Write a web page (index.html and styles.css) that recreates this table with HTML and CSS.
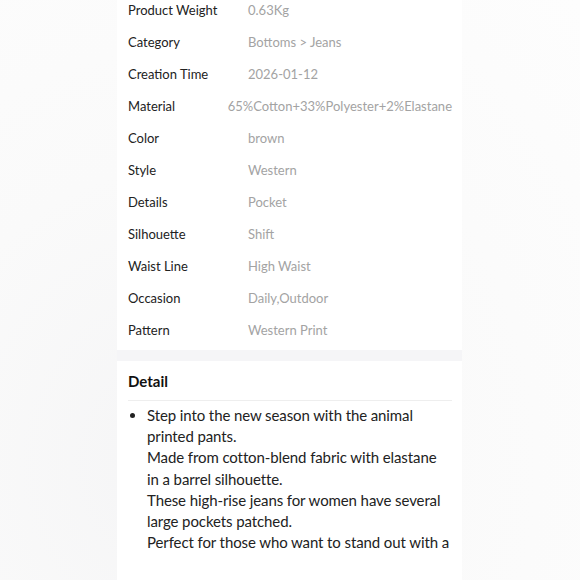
FILE: index.html
```html
<!DOCTYPE html>
<html lang="en">
<head>
<meta charset="utf-8">
<title>Product details</title>
<link rel="stylesheet" href="styles.css">
</head>
<body>
<main class="page">
  <section class="card specs">
    <div class="row"><span class="label">Product Weight</span><span class="value">0.63Kg</span></div>
    <div class="row"><span class="label">Category</span><span class="value">Bottoms &gt; Jeans</span></div>
    <div class="row"><span class="label">Creation Time</span><span class="value">2026-01-12</span></div>
    <div class="row"><span class="label">Material</span><span class="value value-wide">65%Cotton+33%Polyester+2%Elastane</span></div>
    <div class="row"><span class="label">Color</span><span class="value">brown</span></div>
    <div class="row"><span class="label">Style</span><span class="value">Western</span></div>
    <div class="row"><span class="label">Details</span><span class="value">Pocket</span></div>
    <div class="row"><span class="label">Silhouette</span><span class="value">Shift</span></div>
    <div class="row"><span class="label">Waist Line</span><span class="value">High Waist</span></div>
    <div class="row"><span class="label">Occasion</span><span class="value">Daily,Outdoor</span></div>
    <div class="row"><span class="label">Pattern</span><span class="value">Western Print</span></div>
  </section>
  <div class="gap"></div>
  <section class="card detail">
    <h2 class="detail-title">Detail</h2>
    <ul class="detail-list">
      <li>Step into the new season with the animal printed pants.<br>Made from cotton-blend fabric with elastane in a barrel silhouette.<br>These high-rise jeans for women have several large pockets patched.<br>Perfect for those who want to stand out with a</li>
    </ul>
  </section>
</main>
</body>
</html>
```

FILE: styles.css
```css
html, body {
  margin: 0;
  padding: 0;
}
body {
  width: 580px;
  height: 580px;
  overflow: hidden;
  background: radial-gradient(ellipse at 30% 80%, #f5f5f6 0%, #fafafa 45%, #fdfdfd 100%);
  font-family: Lato, "Noto Sans", sans-serif;
}
.page {
  width: 345px;
  margin: -6px 0 0 117px;
  display: flex;
  flex-direction: column;
}
.card {
  background: #fff;
}
.specs {
  padding: 0 10px 4px 11px;
}
.row {
  height: 32px;
  display: flex;
  align-items: center;
  font-size: 13px;
}
.label {
  width: 120px;
  flex: none;
  color: #222;
}
.value {
  width: 204px;
  flex: none;
  display: flex;
  color: #a3a3a3;
  white-space: nowrap;
}
.value-wide {
  justify-content: flex-end;
}
.gap {
  height: 11px;
  background: #f5f5f7;
}
.detail {
  padding: 10px 11.5px 40px 11px;
  height: 260px;
}
.detail-title {
  margin: 0 -1.5px 0 0;
  font-size: 15px;
  font-weight: 700;
  color: #111;
  line-height: 20px;
  padding-bottom: 9px;
  border-bottom: 1px solid #eeeeee;
}
.detail-list {
  margin: 4px 0 0;
  padding: 0 0 0 19px;
  font-size: 15px;
  line-height: 21.2px;
  letter-spacing: -0.1px;
  color: #222;
}
```
